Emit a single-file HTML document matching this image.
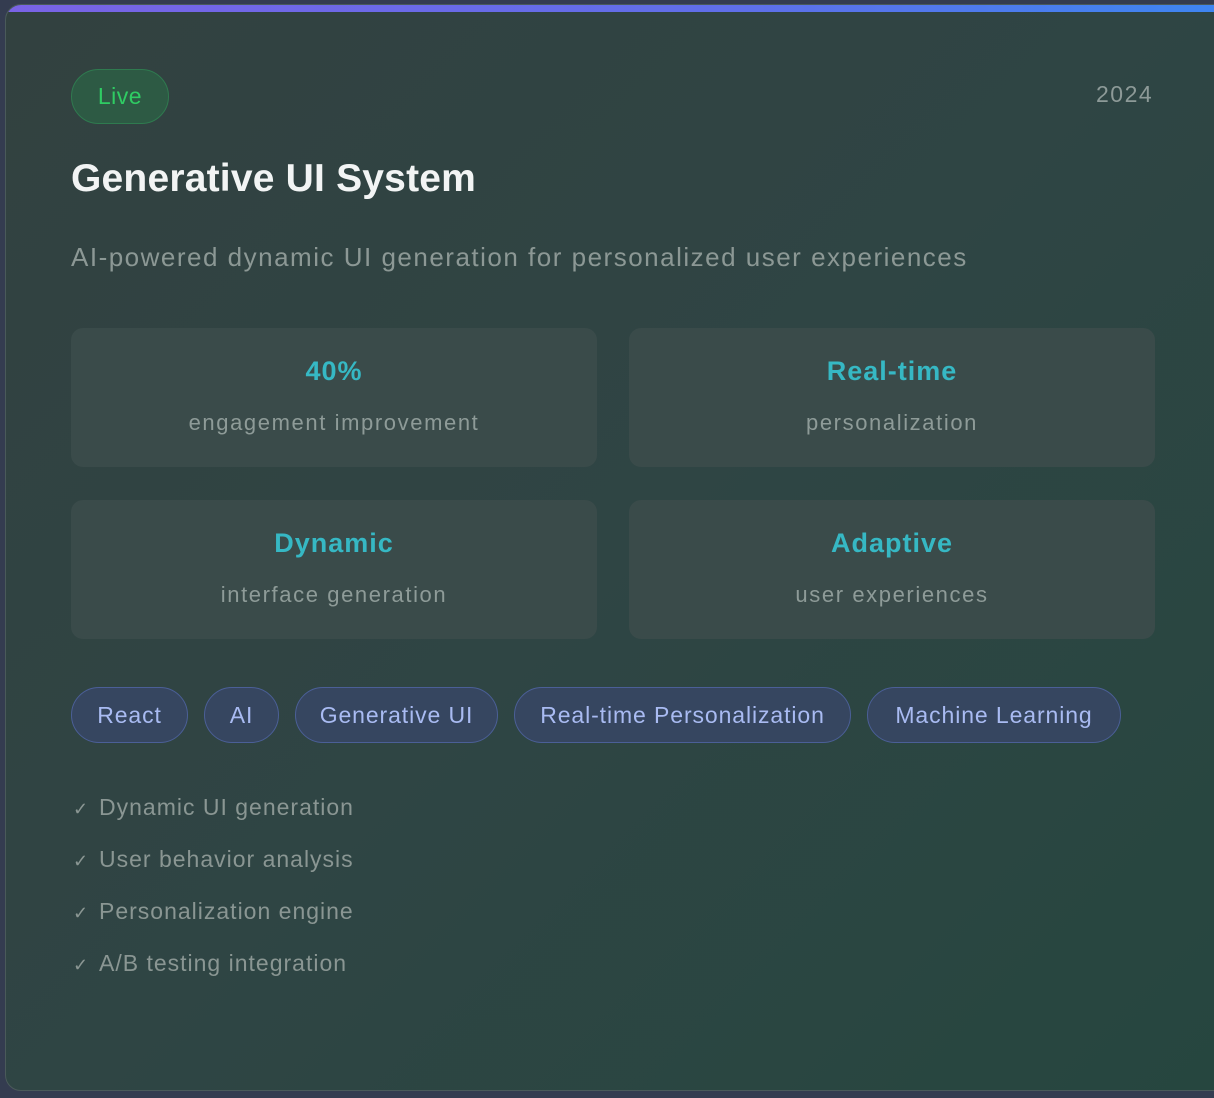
<!DOCTYPE html>
<html><head><meta charset="utf-8"><style>
*{box-sizing:border-box;margin:0;padding:0}
html,body{width:1214px;height:1098px;overflow:hidden;background:#343c50;font-family:"Liberation Sans",sans-serif}
.card{position:absolute;left:5px;top:4px;width:1225px;height:1087px;border-radius:16px;border:1px solid #4a5a5a;overflow:hidden;background:linear-gradient(135deg,#324140 0%,#2f4544 50%,#26463f 100%)}
.bar{position:absolute;left:0;top:0;right:0;height:7px;background:linear-gradient(90deg,#7a63e6,#5f6fe9 60%,#3d86f2)}
.live{position:absolute;left:65px;top:64px;width:98px;height:55px;border-radius:28px;background:#2d5a44;border:1.5px solid #2f7a4f;color:#2fcc63;font-size:23px;letter-spacing:0.5px;display:flex;align-items:center;justify-content:center}
.year{position:absolute;left:1090px;top:76px;color:#8d9a98;font-size:23px;letter-spacing:1.5px}
h1{position:absolute;left:65px;top:152px;color:#f2f4f4;font-size:39px;font-weight:700;letter-spacing:0.2px}
.sub{position:absolute;left:65px;top:237px;color:#8c9895;font-size:26px;letter-spacing:1.5px}
.stat{position:absolute;width:526px;height:139px;border-radius:12px;background:#3a4b4a;text-align:center}
.stat b{display:block;margin-top:28px;color:#36b8c4;font-size:27px;letter-spacing:1px}
.stat span{display:block;margin-top:23px;color:#8e9b98;font-size:22px;letter-spacing:1.6px}
.tag{position:absolute;top:682px;height:56px;border-radius:28px;background:#364660;border:1.5px solid #4b5f97;color:#a9bbf2;font-size:23px;letter-spacing:0.9px;display:flex;align-items:center;justify-content:center}
.f{position:absolute;left:67px;color:#8a9693;font-size:23px;letter-spacing:1px}
.f i{font-style:normal;font-size:18px;margin-right:6px;display:inline-block;width:20px}
</style></head><body>
<div class="card">
<div class="bar"></div>
<div class="live">Live</div>
<div class="year">2024</div>
<h1>Generative UI System</h1>
<div class="sub">AI-powered dynamic UI generation for personalized user experiences</div>
<div class="stat" style="left:65px;top:323px"><b>40%</b><span>engagement improvement</span></div>
<div class="stat" style="left:623px;top:323px"><b>Real-time</b><span>personalization</span></div>
<div class="stat" style="left:65px;top:495px"><b>Dynamic</b><span>interface generation</span></div>
<div class="stat" style="left:623px;top:495px"><b>Adaptive</b><span>user experiences</span></div>
<div class="tag" style="left:65px;width:117px">React</div>
<div class="tag" style="left:198px;width:75px">AI</div>
<div class="tag" style="left:289px;width:203px">Generative UI</div>
<div class="tag" style="left:508px;width:337px">Real-time Personalization</div>
<div class="tag" style="left:861px;width:254px">Machine Learning</div>
<div class="f" style="top:789px"><i>✓</i>Dynamic UI generation</div>
<div class="f" style="top:841px"><i>✓</i>User behavior analysis</div>
<div class="f" style="top:893px"><i>✓</i>Personalization engine</div>
<div class="f" style="top:945px"><i>✓</i>A/B testing integration</div>
</div>
</body></html>
